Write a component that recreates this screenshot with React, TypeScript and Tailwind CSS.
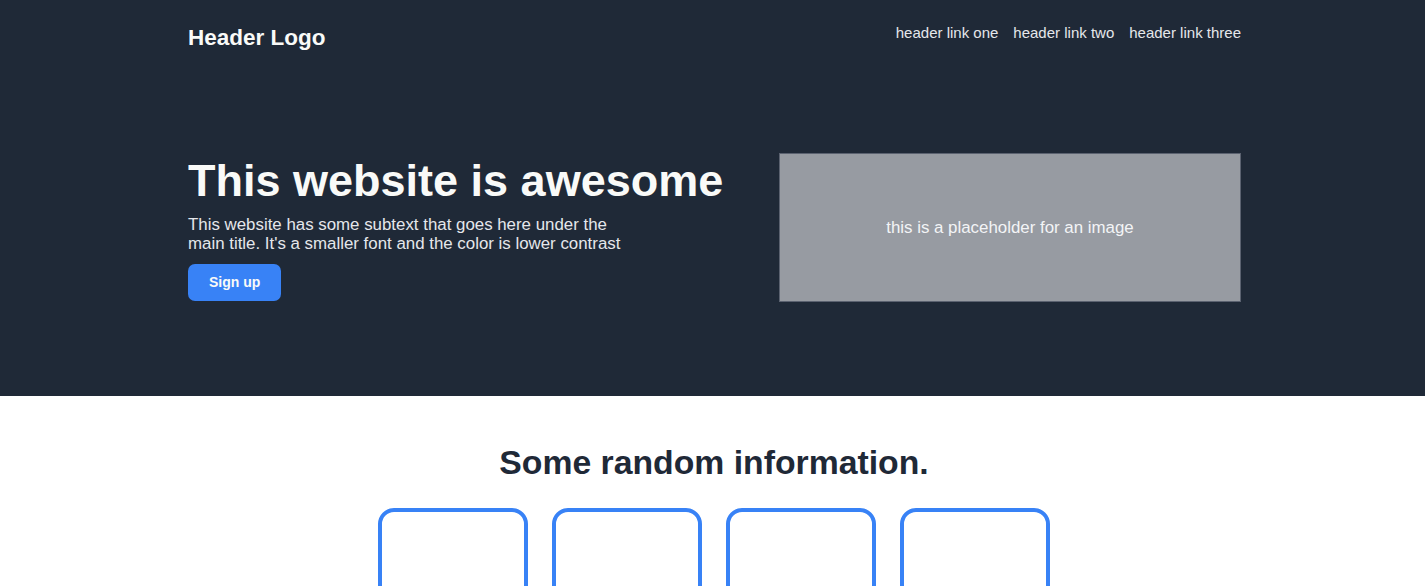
export default function App() {
  const font = { fontFamily: '"Liberation Sans", Arial, sans-serif' };
  return (
    <div style={font} className="min-h-screen bg-white">
      <div className="bg-[#1f2937] pb-[94px]">
        <div className="ml-[188px] w-[1053px]">
          <header className="flex items-start justify-between pt-[24px]">
            <div className="mt-[1px] text-[22.5px] font-bold leading-[1.15] text-[#f9faf8]">Header Logo</div>
            <nav className="flex gap-[15px] text-[15px] leading-[1.15] text-[#e5e7eb]">
              <a>header link one</a>
              <a>header link two</a>
              <a>header link three</a>
            </nav>
          </header>
          <div className="mt-[102px] flex items-start justify-between">
            <div className="flex flex-col">
              <h1 className="mt-[2px] text-[45px] font-bold leading-[1.15] text-[#f9faf8]">This website is awesome</h1>
              <p className="mt-[8px] w-[450px] text-[16.875px] leading-[1.15] text-[#e5e7eb]">
                This website has some subtext that goes here under the main title. It's a smaller font and the color is lower contrast
              </p>
              <div className="mt-[10.5px]">
                <button className="rounded-[7px] bg-[#3882f6] px-[21px] py-[10.5px] text-[14px] font-bold leading-[1.15] text-[#f9faf8]">
                  Sign up
                </button>
              </div>
            </div>
            <div className="flex h-[149px] w-[462px] items-center justify-center border border-[#5b6270] bg-[#979ba2] text-[16.875px] leading-[1.15] text-[#f3f4f6]">
              this is a placeholder for an image
            </div>
          </div>
        </div>
      </div>
      <div className="pl-[3px] pt-[47px]">
        <h2 className="text-center text-[33.75px] font-bold leading-[1.15] text-[#1f2937]">Some random information.</h2>
        <div className="mt-[26px] flex justify-center gap-[24px]">
          <div className="h-[150px] w-[150px] rounded-[16px] border-4 border-[#3882f6]" />
          <div className="h-[150px] w-[150px] rounded-[16px] border-4 border-[#3882f6]" />
          <div className="h-[150px] w-[150px] rounded-[16px] border-4 border-[#3882f6]" />
          <div className="h-[150px] w-[150px] rounded-[16px] border-4 border-[#3882f6]" />
        </div>
      </div>
    </div>
  );
}
